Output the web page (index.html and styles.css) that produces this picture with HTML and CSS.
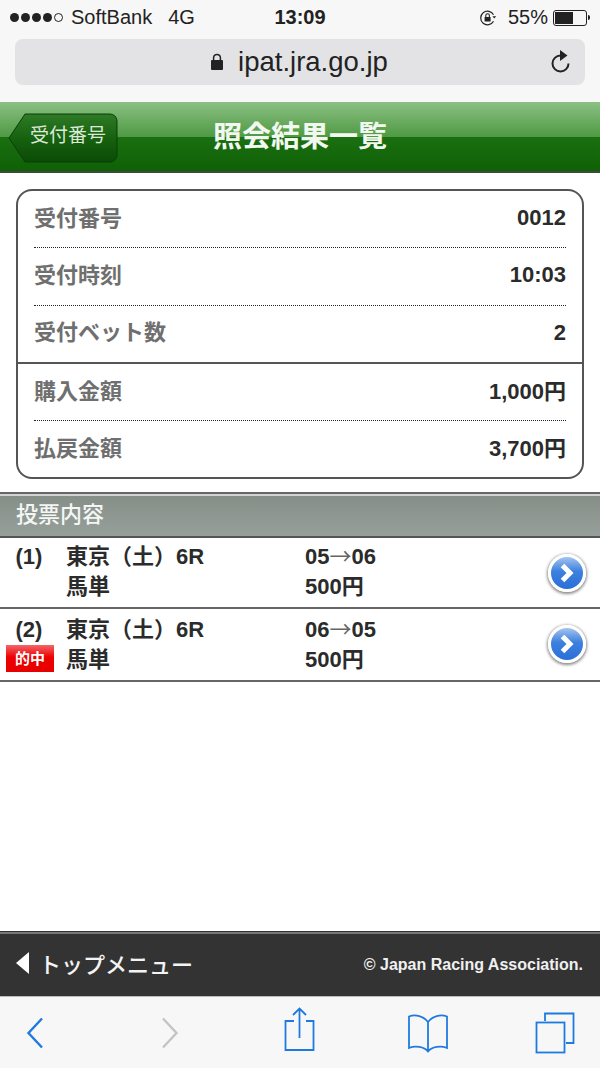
FILE: index.html
```html
<!doctype html>
<html lang="ja">
<head>
    <meta charset="UTF-8">
    <title>照会結果一覧</title>
    <link rel="stylesheet" href="styles.css">
</head>
<body>
<div class="browser-top">
    <div class="status-bar">
        <div class="status-left">
            <span class="signal"><i></i><i></i><i></i><i></i><i class="off"></i></span>
            <span class="carrier">SoftBank</span>
            <span class="network">4G</span>
        </div>
        <div class="status-time">13:09</div>
        <div class="status-right">
            <svg class="rotate-lock" width="18" height="18" viewBox="0 0 18 18">
                <path d="M14.5 12.2A6.8 6.8 0 1 1 14.5 5.8" fill="none" stroke="#222" stroke-width="1.2"/>
                <path d="M13.4 7.2h3.8l-1.9 2.4z" fill="#222"/>
                <rect x="5.6" y="8" width="6" height="4.6" rx=".6" fill="#222"/>
                <path d="M6.8 8V6.6a1.8 1.8 0 0 1 3.6 0V8" fill="none" stroke="#222" stroke-width="1.1"/>
            </svg>
            <span class="battery-pct">55%</span>
            <span class="battery"><span class="battery-level"></span></span>
            <span class="battery-tip"></span>
        </div>
    </div>
    <div class="url-bar">
        <div class="url-text">
            <svg width="14" height="18" viewBox="0 0 14 18">
                <rect x="1" y="7" width="12" height="10" rx="1" fill="#222"/>
                <path d="M3.6 7V4.8a3.4 3.4 0 0 1 6.8 0V7" fill="none" stroke="#222" stroke-width="1.5"/>
            </svg>
            <span>ipat.jra.go.jp</span>
        </div>
        <svg class="reload" width="22" height="26" viewBox="0 0 22 26">
            <path d="M18.500 14.500A8 8 0 1 1 10.500 6.500" fill="none" stroke="#222" stroke-width="2"/>
            <path d="M10 1l7.500 5.500-7.500 5.500z" fill="#222"/>
        </svg>
    </div>
</div>

<header class="page-head">
    <a class="back-btn" href="javascript:;">
        <svg width="110" height="50" viewBox="0 0 110 50">
            <defs>
                <linearGradient id="backFill" x1="0" y1="0" x2="0" y2="1">
                    <stop offset="0" stop-color="#2f7a27"/>
                    <stop offset=".5" stop-color="#17620f"/>
                    <stop offset="1" stop-color="#0b4a07"/>
                </linearGradient>
            </defs>
            <path d="M1 25L17 1h85a7 7 0 0 1 7 7v34a7 7 0 0 1-7 7H17z" fill="url(#backFill)" stroke="#0a3f07"/>
        </svg>
        <span>受付番号</span>
    </a>
    <h1>照会結果一覧</h1>
</header>

<main class="main">
    <div class="summary">
        <div class="summary-group">
            <div class="summary-row"><span>受付番号</span><b>0012</b></div>
            <div class="summary-row"><span>受付時刻</span><b>10:03</b></div>
            <div class="summary-row"><span>受付ベット数</span><b>2</b></div>
        </div>
        <div class="summary-group">
            <div class="summary-row"><span>購入金額</span><b>1,000円</b></div>
            <div class="summary-row"><span>払戻金額</span><b>3,700円</b></div>
        </div>
    </div>

    <h2 class="section-title">投票内容</h2>

    <div class="bet">
        <div class="bet-no">(1)</div>
        <div class="bet-race">東京（土）6R<br>馬単</div>
        <div class="bet-detail">05<span class="arrow">→</span>06<br>500円</div>
        <span class="go-btn"><svg width="22" height="22" viewBox="0 0 22 22"><path d="M6.500 3.500L14 11l-7.500 7.500" fill="none" stroke="#fff" stroke-width="5"/></svg></span>
    </div>
    <div class="bet">
        <div class="bet-no">(2)<span class="hit">的中</span></div>
        <div class="bet-race">東京（土）6R<br>馬単</div>
        <div class="bet-detail">06<span class="arrow">→</span>05<br>500円</div>
        <span class="go-btn"><svg width="22" height="22" viewBox="0 0 22 22"><path d="M6.500 3.500L14 11l-7.500 7.500" fill="none" stroke="#fff" stroke-width="5"/></svg></span>
    </div>
</main>

<footer class="page-foot">
    <a class="top-menu" href="javascript:;"><i class="tri"></i>トップメニュー</a>
    <span class="copy">© Japan Racing Association.</span>
</footer>

<nav class="toolbar">
    <svg class="tb-back" width="24" height="36" viewBox="0 0 24 36"><path d="M19 3.500L5.500 18 19 32.500" fill="none" stroke="#1f7ae0" stroke-width="2.400"/></svg>
    <svg class="tb-fwd" width="24" height="36" viewBox="0 0 24 36"><path d="M5 3.500L18.500 18 5 32.500" fill="none" stroke="#c4c4c6" stroke-width="2.400"/></svg>
    <svg class="tb-share" width="34" height="46" viewBox="0 0 34 46">
        <path d="M11 14H2.500v29h28V14H23M16.500 31V2M10 8l6.500-6.500L23 8" fill="none" stroke="#1f7ae0" stroke-width="1.800"/>
    </svg>
    <svg class="tb-book" width="42" height="40" viewBox="0 0 42 40">
        <path d="M21 9C17 3 8 1 2 3.500V35c6-2.500 15-1.500 19 3.500 4-5 13-6 19-3.500V3.500C34 1 25 3 21 9zM21 9v29.500" fill="none" stroke="#1f7ae0" stroke-width="1.800"/>
    </svg>
    <svg class="tb-tabs" width="40" height="42" viewBox="0 0 40 42">
        <path d="M10 9V1.500h28.500V31H31" fill="none" stroke="#1f7ae0" stroke-width="1.800"/>
        <rect x="1.500" y="10.500" width="28" height="30" fill="none" stroke="#1f7ae0" stroke-width="1.800"/>
    </svg>
</nav>
</body>
</html>
```

FILE: styles.css
```css
* {
    margin: 0;
    padding: 0;
    box-sizing: border-box;
}

html,
body {
    width: 600px;
    height: 1068px;
    overflow: hidden;
}

body {
    display: flex;
    flex-direction: column;
    background: #fff;
    font-family: "Liberation Sans", "Noto Sans CJK JP", sans-serif;
    color: #2b2b2b;
}

a {
    text-decoration: none;
}

/* browser chrome */
.browser-top {
    height: 102px;
    background: #f7f7f7;
}

.status-bar {
    display: flex;
    align-items: center;
    justify-content: space-between;
    position: relative;
    height: 35px;
    padding: 0 10px;
    font-size: 20px;
    color: #222;
}

.status-left,
.status-right {
    display: flex;
    align-items: center;
}

.signal {
    display: flex;
    gap: 2px;
    margin-right: 8px;
}

.signal i {
    width: 9px;
    height: 9px;
    border-radius: 50%;
    background: #222;
}

.signal i.off {
    background: none;
    border: 1px solid #222;
}

.network {
    margin-left: 16px;
}

.status-time {
    position: absolute;
    left: 0;
    right: 0;
    text-align: center;
    font-weight: 700;
    pointer-events: none;
}

.battery-pct {
    margin: 0 5px 0 11px;
}

.battery {
    display: block;
    width: 34px;
    height: 16px;
    padding: 1px;
    border: 1px solid #222;
    border-radius: 3px;
}

.battery-level {
    display: block;
    width: 60%;
    height: 100%;
    background: #222;
}

.battery-tip {
    width: 2px;
    height: 5px;
    margin-left: 1px;
    background: #222;
    border-radius: 0 2px 2px 0;
}

.url-bar {
    display: flex;
    align-items: center;
    justify-content: center;
    position: relative;
    height: 46px;
    margin: 4px 15px 0;
    background: #e3e3e6;
    border-radius: 8px;
}

.url-text {
    display: flex;
    align-items: center;
    gap: 14px;
    margin-right: 2px;
    font-size: 27.500px;
    color: #222;
}

.reload {
    position: absolute;
    right: 13px;
    top: 10px;
}

/* green title bar */
.page-head {
    position: relative;
    height: 71px;
    padding-top: 1px;
    background: linear-gradient(#8cc084 0, #4f9a44 50%, #1a7010 51%, #0f6006 100%);
    border-bottom: 2px solid #3d4a3b;
    text-align: center;
}

.page-head h1 {
    font-size: 29px;
    line-height: 69px;
    font-weight: 700;
    color: #f2f8f0;
}

.back-btn {
    position: absolute;
    left: 8px;
    top: 11px;
    width: 110px;
    height: 50px;
}

.back-btn svg {
    display: block;
}

.back-btn span {
    position: absolute;
    left: 22px;
    top: 0;
    line-height: 46px;
    font-size: 19px;
    color: #dce9d9;
}

/* main */
.main {
    flex: 1;
    padding-top: 16px;
}

.summary {
    height: 290px;
    margin: 0 16px;
    border: 2px solid #555;
    border-radius: 16px;
}

.summary-group + .summary-group {
    border-top: 2px solid #555;
}

.summary-row {
    display: flex;
    align-items: center;
    justify-content: space-between;
    height: 57.500px;
    margin: 0 16px;
    padding-bottom: 7px;
    font-size: 22px;
}

.summary-row:first-child {
    height: 56px;
}

.summary-row + .summary-row {
    border-top: 1px dotted #222;
}

.summary-row span {
    color: #6f6f6f;
    font-weight: 700;
}

.summary-row b {
    margin-top: 5px;
    color: #2b2b2b;
}

.summary-group + .summary-group b {
    margin-top: 0;
}

.section-title {
    height: 46px;
    margin-top: 13px;
    padding-left: 16px;
    background: linear-gradient(#858d87, #96a09a);
    border-top: 2px solid #666;
    border-bottom: 2px solid #555;
    box-shadow: inset 0 2px 0 #d0d4d1;
    font-size: 22px;
    line-height: 42px;
    font-weight: 500;
    color: #f4f6f4;
}

.bet {
    display: flex;
    align-items: flex-start;
    position: relative;
    height: 71px;
    padding-top: 4px;
    border-bottom: 2px solid #666;
    font-size: 22px;
    line-height: 30px;
    font-weight: 700;
}

.bet:last-child {
    height: 73px;
    padding-top: 6px;
}

.bet-no {
    display: flex;
    flex-direction: column;
    align-items: center;
    width: 58px;
}

.hit {
    width: 48px;
    height: 27px;
    margin-left: 2px;
    background: linear-gradient(#f2666a, #ee0000 45%, #e60000);
    color: #fff;
    font-size: 15px;
    line-height: 27px;
    text-align: center;
}

.bet-race {
    width: 247px;
    padding-left: 8px;
}

.bet-detail {
    flex: 1;
}

.arrow {
    color: #666;
    font-family: "Noto Sans CJK JP", sans-serif;
    font-weight: 400;
    line-height: 0;
}

.go-btn {
    position: absolute;
    right: 14px;
    top: 16px;
    display: flex;
    align-items: center;
    justify-content: center;
    width: 38px;
    height: 38px;
    border: 3px solid #fff;
    border-radius: 50%;
    background: linear-gradient(#a4c4ef, #3d80de 45%, #2a6fd8);
    box-shadow: 0 1px 3px 1px rgba(0, 0, 0, 0.45);
}

/* footer */
.page-foot {
    display: flex;
    align-items: center;
    justify-content: space-between;
    height: 64px;
    padding: 0 17px 5px 16px;
    background: #333;
    border-top: 2px solid #777;
    box-shadow: 0 -1px 0 #333;
    color: #f0f0f0;
}

.top-menu {
    display: flex;
    align-items: center;
    color: #f4f4f4;
    font-size: 22px;
    font-weight: 500;
}

.tri {
    width: 0;
    height: 0;
    margin-right: 10px;
    border-style: solid;
    border-width: 11px 13px 11px 0;
    border-color: transparent #fff transparent transparent;
}

.copy {
    margin-top: 5px;
    font-size: 16px;
    font-weight: 700;
}

.toolbar {
    display: flex;
    align-items: center;
    height: 72px;
    padding-left: 23px;
    background: #f7f7f7;
    border-top: 1px solid #bbb;
}

.tb-fwd {
    margin-left: 111px;
}

.tb-share {
    margin: 0 0 5px 101px;
}

.tb-book {
    margin-left: 90px;
}

.tb-tabs {
    margin-left: 86px;
}
```
